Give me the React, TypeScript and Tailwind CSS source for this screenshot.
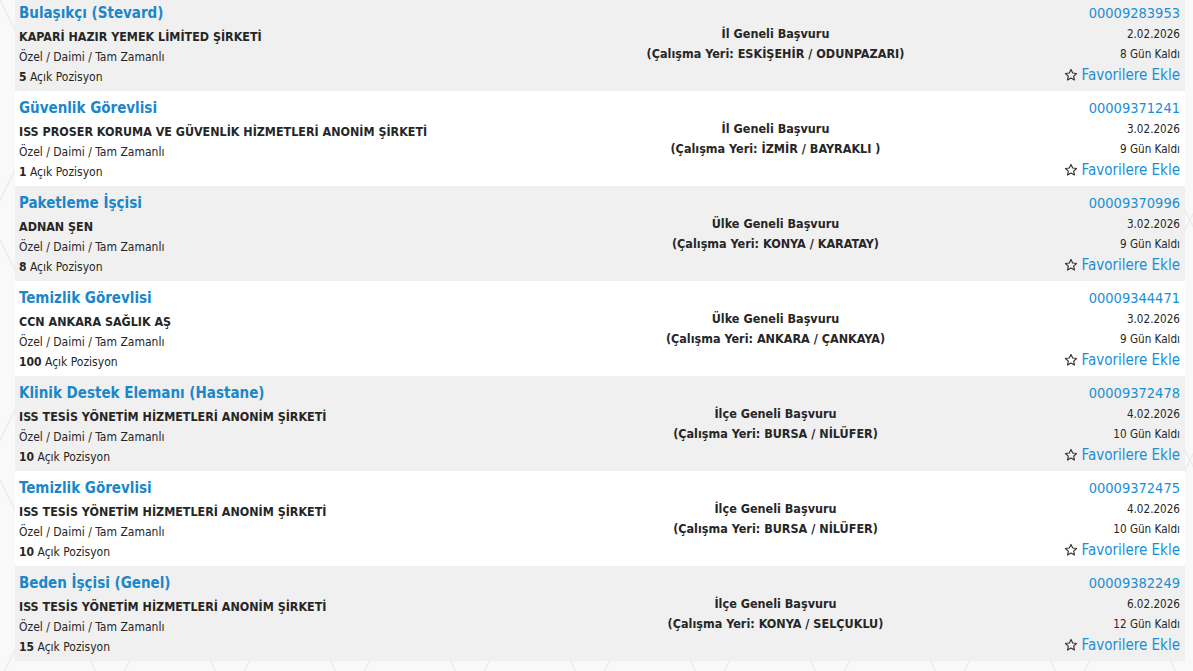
import React from "react";

type Job = {
  title: string;
  company: string;
  count: string;
  scope: string;
  place: string;
  no: string;
  date: string;
  left: string;
};

const jobs: Job[] = [
  { title: "Bulaşıkçı (Stevard)", company: "KAPARİ HAZIR YEMEK LİMİTED ŞİRKETİ", count: "5", scope: "İl Geneli Başvuru", place: "(Çalışma Yeri: ESKİŞEHİR / ODUNPAZARI)", no: "00009283953", date: "2.02.2026", left: "8 Gün Kaldı" },
  { title: "Güvenlik Görevlisi", company: "ISS PROSER KORUMA VE GÜVENLİK HİZMETLERİ ANONİM ŞİRKETİ", count: "1", scope: "İl Geneli Başvuru", place: "(Çalışma Yeri: İZMİR / BAYRAKLI )", no: "00009371241", date: "3.02.2026", left: "9 Gün Kaldı" },
  { title: "Paketleme İşçisi", company: "ADNAN ŞEN", count: "8", scope: "Ülke Geneli Başvuru", place: "(Çalışma Yeri: KONYA / KARATAY)", no: "00009370996", date: "3.02.2026", left: "9 Gün Kaldı" },
  { title: "Temizlik Görevlisi", company: "CCN ANKARA SAĞLIK AŞ", count: "100", scope: "Ülke Geneli Başvuru", place: "(Çalışma Yeri: ANKARA / ÇANKAYA)", no: "00009344471", date: "3.02.2026", left: "9 Gün Kaldı" },
  { title: "Klinik Destek Elemanı (Hastane)", company: "ISS TESİS YÖNETİM HİZMETLERİ ANONİM ŞİRKETİ", count: "10", scope: "İlçe Geneli Başvuru", place: "(Çalışma Yeri: BURSA / NİLÜFER)", no: "00009372478", date: "4.02.2026", left: "10 Gün Kaldı" },
  { title: "Temizlik Görevlisi", company: "ISS TESİS YÖNETİM HİZMETLERİ ANONİM ŞİRKETİ", count: "10", scope: "İlçe Geneli Başvuru", place: "(Çalışma Yeri: BURSA / NİLÜFER)", no: "00009372475", date: "4.02.2026", left: "10 Gün Kaldı" },
  { title: "Beden İşçisi (Genel)", company: "ISS TESİS YÖNETİM HİZMETLERİ ANONİM ŞİRKETİ", count: "15", scope: "İlçe Geneli Başvuru", place: "(Çalışma Yeri: KONYA / SELÇUKLU)", no: "00009382249", date: "6.02.2026", left: "12 Gün Kaldı" },
];

function StarIcon() {
  return (
    <svg width="14" height="14" viewBox="0 0 24 24" fill="none" stroke="#333" strokeWidth="2" strokeLinejoin="round">
      <path d="M12 2.5l2.9 6.1 6.6.8-4.9 4.6 1.3 6.6L12 17.3l-5.9 3.3 1.3-6.6-4.9-4.6 6.6-.8z" />
    </svg>
  );
}

function Background() {
  const lines: string[] = [];
  for (let i = -6; i < 20; i++) {
    const x = i * 120;
    lines.push(`M${x} 0 L${x + 340} 680`);
    lines.push(`M${x + 340} 0 L${x} 680`);
  }
  return (
    <svg className="absolute inset-0 w-full h-full" viewBox="0 0 1193 671" preserveAspectRatio="none">
      <rect width="1193" height="671" fill="#f9f9f9" />
      {lines.map((d, i) => (
        <path key={i} d={d} stroke="#ececec" strokeWidth="1.5" fill="none" />
      ))}
    </svg>
  );
}

export default function App() {
  return (
    <div
      className="relative w-[1193px] h-[671px] overflow-hidden text-[#333]"
      style={{ fontFamily: '"DejaVu Sans Condensed", "DejaVu Sans", Tahoma, sans-serif' }}
    >
      <Background />
      <div className="relative pl-[15px] pr-[8px] -mt-[4px]">
        {jobs.map((j, i) => (
          <div
            key={i}
            className={`flex h-[95px] ${i % 2 === 0 ? "bg-[#f0f0f0]" : "bg-white"}`}
          >
            <div className="w-1/2 pl-[4px] pt-[7px]">
              <div className="text-[15px] leading-[20px] font-bold text-[#1a87c9]">{j.title}</div>
              <div className="mt-[4px] text-[12.4px] leading-[20px] font-bold text-[#262626]">{j.company}</div>
              <div className="text-[12px] leading-[20px] text-[#262626]">Özel / Daimi / Tam Zamanlı</div>
              <div className="text-[12px] leading-[20px] text-[#262626]">
                <span className="font-bold">{j.count}</span> Açık Pozisyon
              </div>
            </div>
            <div className="w-[30%] flex flex-col items-center justify-center text-[12.5px] leading-[20px] font-bold text-[#262626]">
              <div>{j.scope}</div>
              <div>{j.place}</div>
            </div>
            <div className="w-1/5 pr-[5px] pt-[7px] flex flex-col items-end">
              <div className="text-[14.5px] leading-[20px] text-[#1a8fd3]">{j.no}</div>
              <div className="mt-[1px] text-[11.6px] leading-[20px] text-[#262626]">{j.date}</div>
              <div className="text-[11.6px] leading-[20px] text-[#262626]">{j.left}</div>
              <div className="mt-[1px] flex items-center gap-[4px] text-[15px] leading-[20px] text-[#1a8fd3]">
                <StarIcon />
                <span>Favorilere Ekle</span>
              </div>
            </div>
          </div>
        ))}
      </div>
    </div>
  );
}
